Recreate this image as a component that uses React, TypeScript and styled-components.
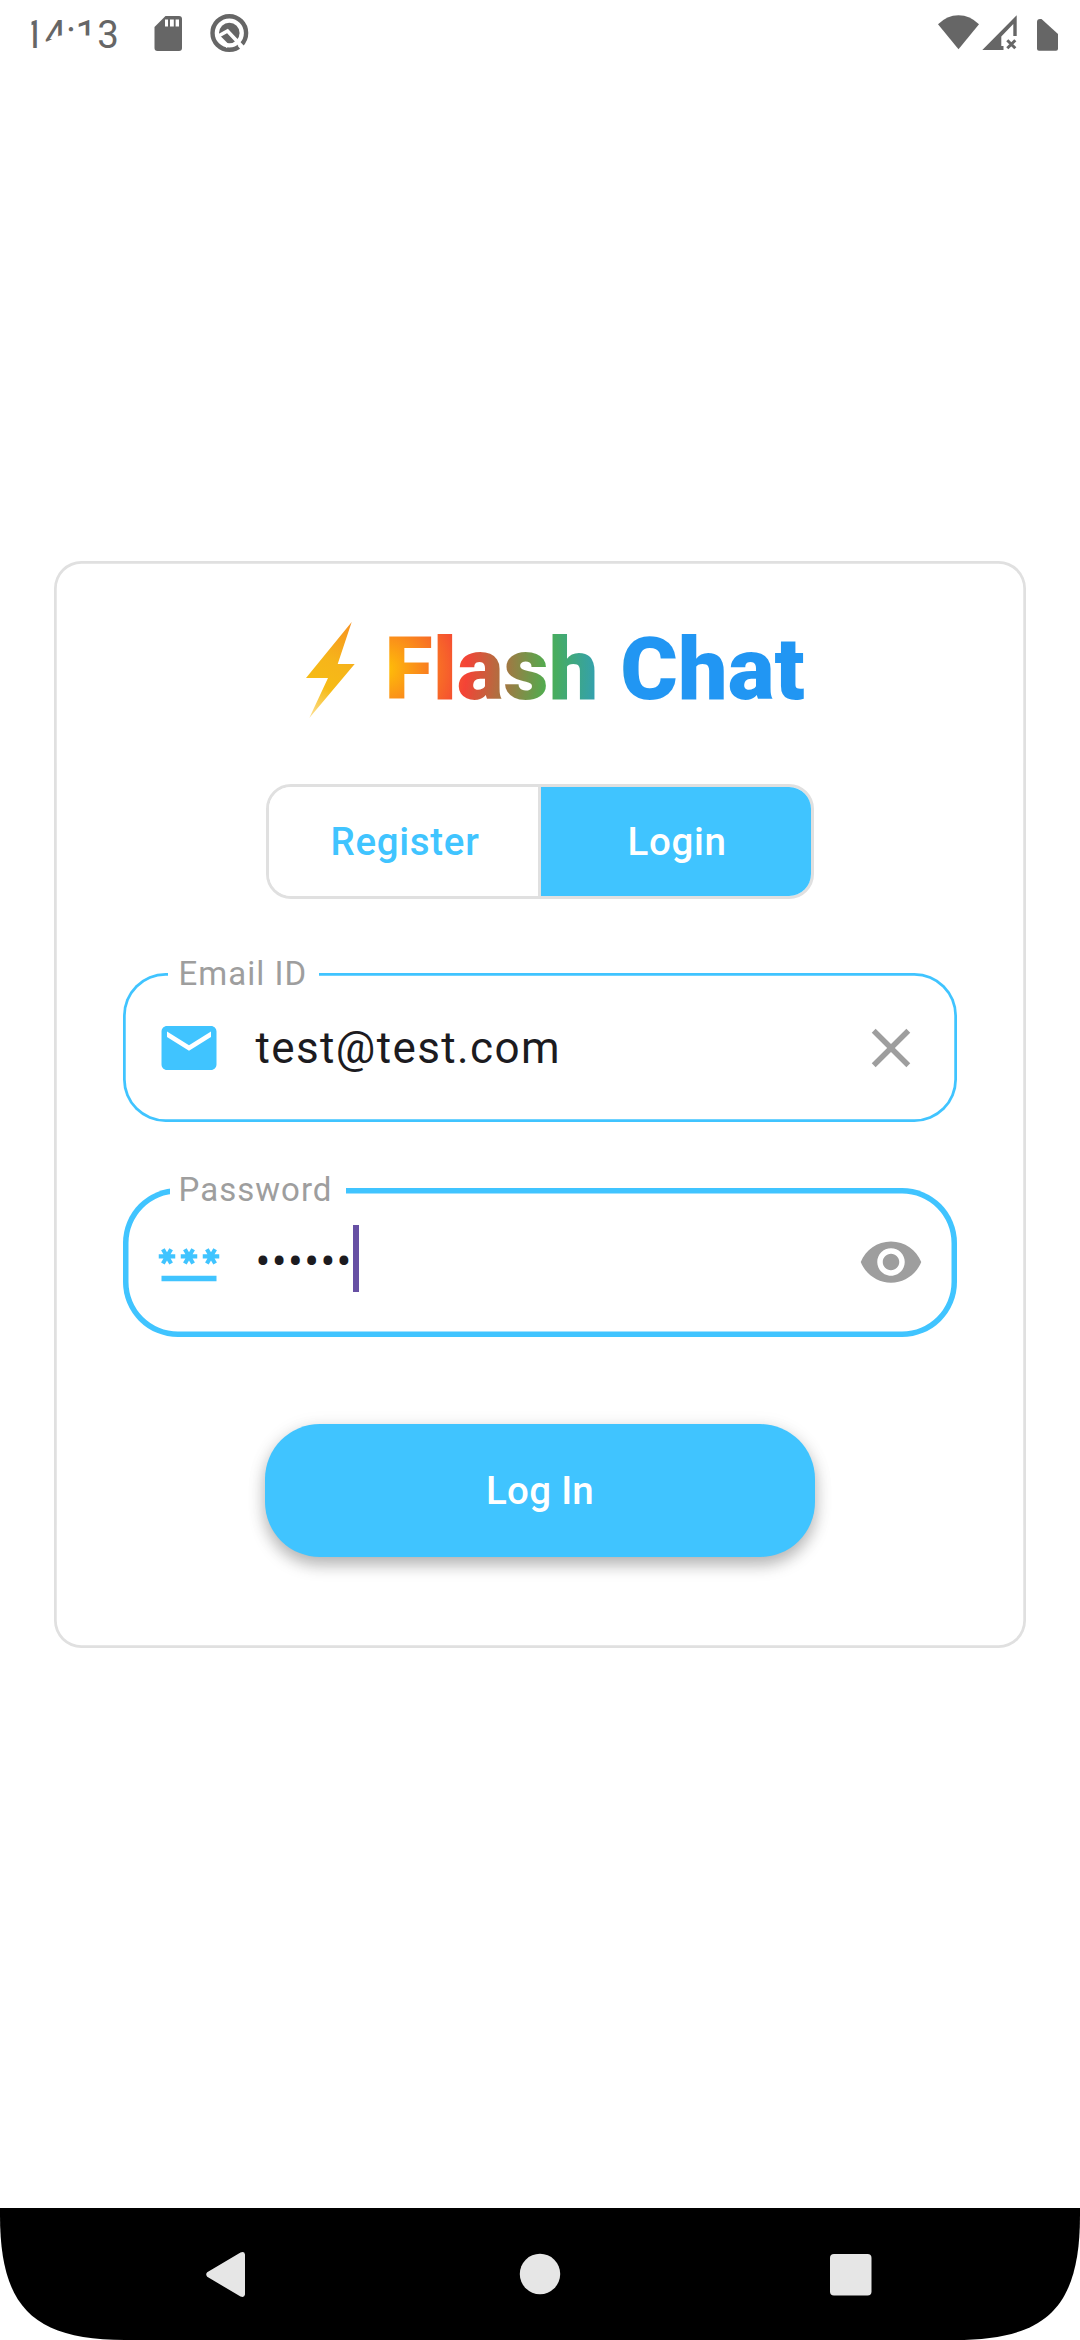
import React from "react";
import styled, { createGlobalStyle } from "styled-components";

const SKY = "#40c4ff";
const GREY = "#9e9e9e";
const LINE = "#e0e0e0";
const STATUS = "#666666";

const GlobalStyle = createGlobalStyle`
  * { box-sizing: border-box; }
  body {
    margin: 0;
    background: #fff;
    font-family: Roboto, "Noto Sans", sans-serif;
    -webkit-font-smoothing: antialiased;
  }
  svg { display: block; flex: none; }
`;

const Screen = styled.div`
  width: 1080px;
  height: 2340px;
  display: flex;
  flex-direction: column;
  overflow: hidden;
  background: #fff;
`;

const StatusBar = styled.header`
  height: 66px;
  flex: none;
  display: flex;
  justify-content: space-between;
  color: ${STATUS};
`;

const StatusGroup = styled.div`
  display: flex;
`;

/* The clock is caught mid-animation, so its middle digits are only partly revealed. */
const Clock = styled.span`
  width: 130px;
  height: 66px;
  padding: 12px 0 0 23px;
  font-size: 38.5px;
  line-height: 45px;
  white-space: nowrap;
  clip-path: polygon(
    31.5px 0, 130px 0, 130px 66px, 93px 66px, 93px 35.5px, 60px 35.5px,
    47px 41.5px, 41px 41.5px, 41px 66px, 31.5px 66px
  );
`;

const Main = styled.main`
  flex: 1;
  display: flex;
  flex-direction: column;
  align-items: center;
  padding-top: 495px;
`;

const Card = styled.section`
  width: 972px;
  height: 1086.5px;
  padding-top: 48px;
  display: flex;
  flex-direction: column;
  align-items: center;
  border-radius: 27.5px;
  box-shadow: inset 0 0 0 2.75px ${LINE};
`;

const Brand = styled.div`
  height: 120px;
  width: 498px;
  padding-left: 13px;
  display: flex;
  align-items: center;
`;

const Title = styled.h1`
  margin: 0 0 0 28.5px;
  font-size: 88px;
  font-weight: 900;
  line-height: 104px;
  white-space: nowrap;
  color: transparent;
  background: radial-gradient(circle 246px at 0 52px, #ffc107 0%, #f44336 33.3%, #4caf50 66.6%, #2196f3 100%);
  background-clip: text;
  -webkit-background-clip: text;
`;

const Toggle = styled.div`
  width: 548px;
  height: 115px;
  margin-top: 55px;
  display: grid;
  grid-template-columns: 272px 270px;
  border: 3px solid ${LINE};
  border-radius: 25px;
  overflow: hidden;
`;

const ToggleOption = styled.button<{ $active?: boolean }>`
  display: flex;
  align-items: center;
  justify-content: center;
  border: 0;
  border-right: ${(p) => (p.$active ? "0" : `3px solid ${LINE}`)};
  padding: 0 0 0 ${(p) => (p.$active ? "2px" : "3px")};
  font: 500 38.5px/55px Roboto, sans-serif;
  letter-spacing: 0.69px;
  color: ${(p) => (p.$active ? "#fff" : SKY)};
  background: ${(p) => (p.$active ? SKY : "#fff")};
`;

const Field = styled.div<{ $focused?: boolean; $gap: number }>`
  position: relative;
  width: 834.6px;
  height: 149px;
  margin-top: ${(p) => p.$gap}px;
  padding: 0 33.2px ${(p) => (p.$focused ? 1 : 0)}px 32.8px;
  display: flex;
  align-items: center;
  border-radius: ${(p) => (p.$focused ? 55 : 42.6)}px;
  box-shadow: inset 0 0 0 ${(p) => (p.$focused ? 5.5 : 2.75)}px ${SKY};
`;

/* The floating label sits over the outline and interrupts it. */
const FloatingLabel = styled.label<{ $width: number; $left: number; $top: number }>`
  position: absolute;
  left: ${(p) => p.$left}px;
  top: ${(p) => p.$top}px;
  width: ${(p) => p.$width}px;
  height: 39px;
  padding-left: ${(p) => 55.8 - p.$left}px;
  background: #fff;
  color: ${GREY};
  font-size: 33px;
  line-height: 39px;
  letter-spacing: 1.03px;
  white-space: nowrap;
`;

const Value = styled.span`
  flex: 1;
  display: flex;
  align-items: center;
  margin-left: 34px;
  height: 67px;
  font-size: 44px;
  line-height: 68px;
  letter-spacing: 1.375px;
  color: #1c1b1f;
`;

const Caret = styled.i`
  align-self: flex-start;
  width: 6px;
  height: 67px;
  margin-top: -3.5px;
  background: #6750a4;
`;

const Submit = styled.button`
  width: 550px;
  height: 132.5px;
  margin-top: 87px;
  border: 0;
  border-radius: 55px;
  background: ${SKY};
  color: #fff;
  font: 500 38.5px/55px Roboto, sans-serif;
  letter-spacing: 0.3px;
  box-shadow: 0 8px 16px rgba(0, 0, 0, 0.26), 0 3px 20px rgba(0, 0, 0, 0.08);
`;

const NavBar = styled.nav`
  flex: none;
  height: 132px;
  padding: 0 75px;
  display: grid;
  grid-template-columns: repeat(3, 310px);
  align-items: center;
  justify-items: center;
  background: #000;
  clip-path: path("M0 0H1080V7C1080 99 1047 132 955 132H125C33 132 0 99 0 7Z");
`;

const StatusLeft = () => (
  <svg width="160" height="66" viewBox="130 0 160 66">
    <path fill={STATUS} d="M165.500 16H179a3 3 0 0 1 3 3v29a3 3 0 0 1-3 3h-21.500a3 3 0 0 1-3-3V27Z" />
    <path fill="#fff" d="M165 19.500h3v7h-3zM170 19.500h3.800v7H170zM175.600 19.500h3.400v7h-3.400z" />
    <circle cx="229.300" cy="33" r="16.800" fill="none" stroke={STATUS} strokeWidth="4.400" />
    <circle cx="229.300" cy="33" r="10.300" fill={STATUS} />
    <path d="M217.500 36.500 227.500 31 244 48.500" fill="none" stroke="#fff" strokeWidth="3.600" />
    <path d="M217.500 36 228 46.500" fill="none" stroke="#fff" strokeWidth="4" />
    <path d="M239 44.500 243.500 50" fill="none" stroke="#fff" strokeWidth="3.600" />
  </svg>
);

const StatusRight = () => (
  <svg width="160" height="66" viewBox="920 0 160 66">
    <g fill={STATUS}>
      <path d="M958.500 49.300 938 24.300Q947 15.200 958.500 15.200T979 24.300Z" />
      <path d="M982.300 50 1016.700 15.300V36H1013.300V24L1001.300 36.500V46H1003.500V50Z" />
      <path d="M1040 19h1.500L1058 34v14.700a2 2 0 0 1-2 2h-17a2 2 0 0 1-2-2V22a3 3 0 0 1 3-3Z" />
    </g>
    <path d="m1007.300 40.300 8 8m0-8-8 8" stroke={STATUS} strokeWidth="3" />
  </svg>
);

const Bolt = () => (
  <svg width="52" height="100" viewBox="304 619 52 100">
    <defs>
      <linearGradient id="bolt" gradientUnits="userSpaceOnUse" x1="303" y1="717" x2="352" y2="625">
        <stop offset="0" stopColor="#fde3a0" />
        <stop offset="0.350" stopColor="#f6bb16" />
        <stop offset="0.600" stopColor="#f6b51a" />
        <stop offset="1" stopColor="#f79420" />
      </linearGradient>
    </defs>
    <path fill="url(#bolt)" d="M351.700 622 337.700 664H354.700L309.300 718 328 678H306Z" />
  </svg>
);

const MailIcon = () => (
  <svg width="66" height="66" viewBox="0 0 24 24" fill={SKY}>
    <path d="M20 4H4c-1.100 0-1.990.9-1.990 2L2 18c0 1.100.9 2 2 2h16c1.100 0 2-.9 2-2V6c0-1.100-.9-2-2-2zm0 4-8 5-8-5V6l8 5 8-5v2z" />
  </svg>
);

const PasswordIcon = () => (
  <svg width="66" height="66" viewBox="0 0 24 24" fill={SKY}>
    <path d="M2 17h20v2H2v-2zm1.150-4.050L4 11.470l.85 1.480 1.300-.75-.85-1.480H7v-1.500H5.300l.85-1.470L4.850 7 4 8.470 3.150 7l-1.300.75.85 1.470H1v1.500h1.700l-.85 1.480 1.300.75zm6.700-.75 1.300.75.85-1.480.85 1.480 1.300-.75-.85-1.480H15v-1.500h-1.700l.85-1.470-1.300-.75L12 8.470 11.150 7l-1.300.75.85 1.470H9v1.500h1.700l-.85 1.480zM23 9.220h-1.700l.85-1.470-1.300-.75L20 8.470 19.150 7l-1.300.75.85 1.470H17v1.500h1.700l-.85 1.480 1.300.75.85-1.480.85 1.480 1.300-.75-.85-1.480H23v-1.500z" />
  </svg>
);

const CloseIcon = () => (
  <svg width="66" height="66" viewBox="0 0 24 24" fill={GREY}>
    <path d="M19 6.410 17.590 5 12 10.590 6.410 5 5 6.410 10.590 12 5 17.590 6.410 19 12 13.410 17.590 19 19 17.590 13.410 12z" />
  </svg>
);

const EyeIcon = () => (
  <svg width="66" height="66" viewBox="0 0 24 24" fill={GREY}>
    <path d="M12 4.500C7 4.500 2.730 7.610 1 12c1.730 4.390 6 7.500 11 7.500s9.270-3.110 11-7.500c-1.730-4.390-6-7.500-11-7.500zM12 17c-2.760 0-5-2.240-5-5s2.240-5 5-5 5 2.240 5 5-2.240 5-5 5zm0-8c-1.660 0-3 1.340-3 3s1.340 3 3 3 3-1.340 3-3-1.340-3-3-3z" />
  </svg>
);

const BackIcon = () => (
  <svg width="66" height="66" viewBox="0 0 66 66" fill="#e6e6e6">
    <path d="M10.200 31.300 43.500 11.400q4-1.500 4.500 2V53.600q-.5 3.500-4.500 2L10.200 35.700q-2-2.200 0-4.400Z" />
  </svg>
);

const HomeIcon = () => (
  <svg width="66" height="66" viewBox="0 0 66 66" fill="#e6e6e6">
    <circle cx="33" cy="33" r="20.200" />
  </svg>
);

const RecentsIcon = () => (
  <svg width="66" height="66" viewBox="0 0 66 66" fill="#e6e6e6">
    <rect x="13" y="13" width="41.500" height="41.500" rx="4" />
  </svg>
);

export default function App() {
  return (
    <>
      <GlobalStyle />
      <Screen>
        <StatusBar>
          <StatusGroup>
            <Clock>14:13</Clock>
            <StatusLeft />
          </StatusGroup>
          <StatusRight />
        </StatusBar>
        <Main>
          <Card>
            <Brand>
              <Bolt />
              <Title>Flash Chat</Title>
            </Brand>
            <Toggle>
              <ToggleOption>Register</ToggleOption>
              <ToggleOption $active>Login</ToggleOption>
            </Toggle>
            <Field $gap={74}>
              <FloatingLabel $left={45.3} $top={-19} $width={151}>Email ID</FloatingLabel>
              <MailIcon />
              <Value>test@test.com</Value>
              <CloseIcon />
            </Field>
            <Field $focused $gap={66}>
              <FloatingLabel $left={47.3} $top={-18} $width={175.7}>Password</FloatingLabel>
              <PasswordIcon />
              <Value>
                ••••••
                <Caret />
              </Value>
              <EyeIcon />
            </Field>
            <Submit>Log In</Submit>
          </Card>
        </Main>
        <NavBar>
          <BackIcon />
          <HomeIcon />
          <RecentsIcon />
        </NavBar>
      </Screen>
    </>
  );
}
